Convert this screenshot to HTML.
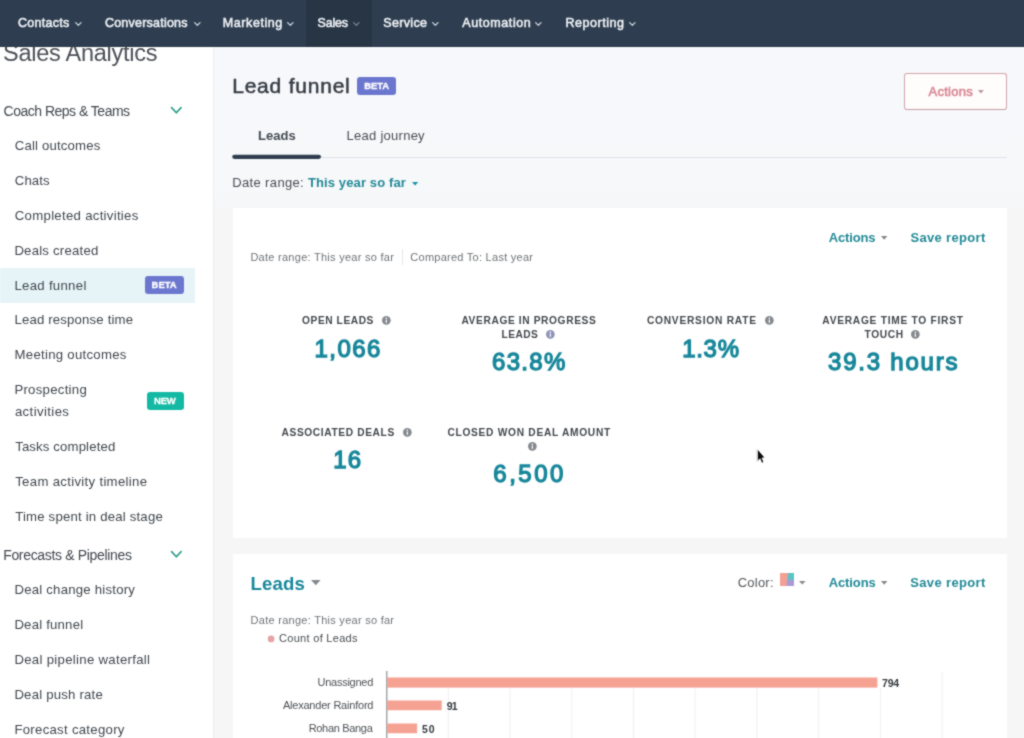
<!DOCTYPE html>
<html lang="en">
<head>
<meta charset="utf-8">
<title>Sales Analytics - Lead funnel</title>
<style>
html,body{margin:0;padding:0}
body{position:relative;width:1024px;height:738px;overflow:hidden;background:#f5f7f9;font-family:"Liberation Sans",Arial,sans-serif;color:#33475b}
h1,h2,h3,a,b,strong,span{margin:0;padding:0;font-weight:400;text-decoration:none}
.t{position:absolute;white-space:nowrap;line-height:1;display:block}
.ic{position:absolute;display:block;overflow:visible}
.box{position:absolute;display:block}
#navbg{left:-20px;top:-20px;width:1064px;height:67px;background:#2e3e50}
#nav .on{left:306px;top:-20px;width:66px;height:67px;background:#273545}
#side{left:-20px;top:46px;width:233px;height:712px;background:#fff;z-index:1}
#main{left:213px;top:46px;width:831px;height:712px;background:linear-gradient(#f6f8fb 0,#f6f8fa 140px,#f6f6f7 170px,#f6f6f7 100%);box-sizing:border-box;border-left:1.5px solid #ededee}
#app{position:absolute;left:0;top:0;width:1024px;height:738px;filter:url(#soft)}
.layer{position:absolute;left:0;top:0;width:1024px;height:738px}
.card{background:#fff}
.badge{border-radius:3px}
</style>
</head>
<body>
<svg width="0" height="0" style="position:absolute" aria-hidden="true"><defs><filter id="soft" x="0" y="0" width="100%" height="100%" color-interpolation-filters="sRGB"><feConvolveMatrix order="3" kernelMatrix="1 2 1 2 11 2 1 2 1" divisor="23" edgeMode="duplicate" preserveAlpha="true"/></filter></defs></svg>
<div id="app">

<div id="main" class="box"></div>
<div id="side" class="box"></div>

<aside class="layer" style="z-index:2">
<i class="box" style="left:0;top:268px;width:195px;height:35px;background:#e6f4f8"></i>
<i class="box badge" style="left:144.6px;top:276.2px;width:39.2px;height:18px;background:#6b77cf"></i>
<i class="box badge" style="left:146.6px;top:391.8px;width:37.2px;height:17.8px;background:#13b9a3"></i>
<svg class="ic" style="left:171.0px;top:107.2px" width="10.7" height="6.6" viewBox="0 0 10.7 6.6"><path d="M0.6 0.6 L5.35 5.8 L10.1 0.6" fill="none" stroke="#2a9c88" stroke-width="1.6" stroke-linecap="round" stroke-linejoin="round"/></svg>
<svg class="ic" style="left:171.0px;top:550.6px" width="10.7" height="6.6" viewBox="0 0 10.7 6.6"><path d="M0.6 0.6 L5.35 5.8 L10.1 0.6" fill="none" stroke="#2a9c88" stroke-width="1.6" stroke-linecap="round" stroke-linejoin="round"/></svg>
<h1 class="t" style="left:3.0px;top:42px;font-size:23.5px;color:#4c5157;letter-spacing:-0.25px;">Sales Analytics</h1>
<h2 class="t" style="left:3.6px;top:104px;font-size:14px;color:#41474d;letter-spacing:-0.51px;">Coach Reps &amp; Teams</h2>
<a class="t" style="left:14.8px;top:139px;font-size:13.2px;color:#41474d;letter-spacing:0.16px;">Call outcomes</a>
<a class="t" style="left:14.8px;top:174px;font-size:13.2px;color:#41474d;letter-spacing:0.09px;">Chats</a>
<a class="t" style="left:14.8px;top:209px;font-size:13.2px;color:#41474d;letter-spacing:0.29px;">Completed activities</a>
<a class="t" style="left:14.4px;top:244px;font-size:13.2px;color:#41474d;letter-spacing:0.21px;">Deals created</a>
<a class="t" style="left:14.4px;top:279px;font-size:13.2px;color:#41474d;letter-spacing:0.30px;">Lead funnel</a>
<a class="t" style="left:14.4px;top:313px;font-size:13.2px;color:#41474d;letter-spacing:0.17px;">Lead response time</a>
<a class="t" style="left:14.5px;top:348px;font-size:13.2px;color:#41474d;letter-spacing:0.28px;">Meeting outcomes</a>
<a class="t" style="left:14.4px;top:383px;font-size:13.2px;color:#41474d;letter-spacing:0.27px;">Prospecting</a>
<a class="t" style="left:14.9px;top:405px;font-size:13.2px;color:#41474d;letter-spacing:0.39px;">activities</a>
<a class="t" style="left:15.2px;top:440px;font-size:13.2px;color:#41474d;letter-spacing:0.13px;">Tasks completed</a>
<a class="t" style="left:15.2px;top:475px;font-size:13.2px;color:#41474d;letter-spacing:0.31px;">Team activity timeline</a>
<a class="t" style="left:15.2px;top:510px;font-size:13.2px;color:#41474d;letter-spacing:0.19px;">Time spent in deal stage</a>
<h2 class="t" style="left:3.2px;top:548px;font-size:14px;color:#41474d;letter-spacing:-0.33px;">Forecasts &amp; Pipelines</h2>
<a class="t" style="left:14.4px;top:583px;font-size:13.2px;color:#41474d;letter-spacing:0.22px;">Deal change history</a>
<a class="t" style="left:14.4px;top:618px;font-size:13.2px;color:#41474d;letter-spacing:0.20px;">Deal funnel</a>
<a class="t" style="left:14.4px;top:653px;font-size:13.2px;color:#41474d;letter-spacing:0.30px;">Deal pipeline waterfall</a>
<a class="t" style="left:14.4px;top:688px;font-size:13.2px;color:#41474d;letter-spacing:0.20px;">Deal push rate</a>
<a class="t" style="left:14.4px;top:723px;font-size:13.2px;color:#41474d;letter-spacing:0.28px;">Forecast category</a>
<b class="t" style="left:151.6px;top:280px;font-size:9.5px;font-weight:700;color:#fff;letter-spacing:-0.05px;-webkit-text-stroke:0.3px #fff;">BETA</b>
<b class="t" style="left:154.1px;top:396px;font-size:9.5px;font-weight:700;color:#fff;letter-spacing:-0.23px;-webkit-text-stroke:0.3px #fff;">NEW</b>
</aside>

<header class="layer" style="z-index:2">
<i class="box badge" style="left:357.4px;top:76.8px;width:38.8px;height:17.8px;background:#6b77cf"></i>
<i class="box" style="left:904.4px;top:73px;width:102.6px;height:37px;box-sizing:border-box;border:1px solid #d3a5ab;border-bottom-color:#c69da3;border-radius:3px;background:#fffcfc"></i>
<svg class="ic" style="left:978.0px;top:89.6px" width="5.8" height="3.4" viewBox="0 0 5.8 3.4"><path d="M0 0 H5.8 L2.9 3.4 Z" fill="#b8979c"/></svg>
<i class="box" style="left:233px;top:156.5px;width:774px;height:1px;background:#dde1e6"></i>
<svg class="ic" style="left:230px;top:150px" width="100" height="14" viewBox="230 150 100 14"><rect x="232.2" y="154.7" width="88.8" height="4.3" rx="2.15" fill="#2e3e50"/></svg>
<svg class="ic" style="left:411.8px;top:181.8px" width="6.2" height="3.4" viewBox="0 0 6.2 3.4"><path d="M0 0 H6.2 L3.1 3.4 Z" fill="#1b93a7"/></svg>
<h1 class="t" style="left:232.2px;top:75px;font-size:21px;color:#363c44;letter-spacing:0.78px;-webkit-text-stroke:0.5px #363c44;">Lead funnel</h1>
<b class="t" style="left:364.2px;top:81px;font-size:9.5px;font-weight:700;color:#fff;letter-spacing:-0.05px;-webkit-text-stroke:0.3px #fff;">BETA</b>
<span class="t" style="left:928.5px;top:85px;font-size:13px;color:#d98a94;letter-spacing:0.28px;-webkit-text-stroke:0.6px #d98a94;">Actions</span>
<a class="t" style="left:257.9px;top:129px;font-size:13px;font-weight:700;color:#444b53;letter-spacing:0.06px;">Leads</a>
<a class="t" style="left:346.6px;top:129px;font-size:13px;color:#4a4f55;letter-spacing:0.26px;">Lead journey</a>
<span class="t" style="left:232.3px;top:176px;font-size:13px;color:#4a4f55;letter-spacing:0.35px;">Date range:</span>
<a class="t" style="left:307.9px;top:176px;font-size:13px;font-weight:700;color:#238a97;letter-spacing:0.12px;">This year so far</a>
</header>

<section class="layer" style="z-index:2">
<i class="box card" style="left:233px;top:208px;width:774px;height:329.5px"></i>
<i class="box" style="left:402px;top:249px;width:1px;height:16px;background:#e3e6ea"></i>
<svg class="ic" style="left:881.0px;top:235.7px" width="6.4" height="3.8" viewBox="0 0 6.4 3.8"><path d="M0 0 H6.4 L3.2 3.8 Z" fill="#84888c"/></svg>
<svg class="ic" style="left:382.0px;top:316.2px" width="8.7" height="8.7" viewBox="0 0 10 10"><circle cx="5" cy="5" r="5" fill="#85898d"/><rect x="4.3" y="4.2" width="1.4" height="3.6" fill="#fff"/><circle cx="5" cy="2.7" r="0.9" fill="#fff"/></svg><svg class="ic" style="left:546.2px;top:329.8px" width="8.7" height="8.7" viewBox="0 0 10 10"><circle cx="5" cy="5" r="5" fill="#8f93b8"/><rect x="4.3" y="4.2" width="1.4" height="3.6" fill="#fff"/><circle cx="5" cy="2.7" r="0.9" fill="#fff"/></svg><svg class="ic" style="left:765.4px;top:316.2px" width="8.7" height="8.7" viewBox="0 0 10 10"><circle cx="5" cy="5" r="5" fill="#85898d"/><rect x="4.3" y="4.2" width="1.4" height="3.6" fill="#fff"/><circle cx="5" cy="2.7" r="0.9" fill="#fff"/></svg><svg class="ic" style="left:911.4px;top:329.8px" width="8.7" height="8.7" viewBox="0 0 10 10"><circle cx="5" cy="5" r="5" fill="#85898d"/><rect x="4.3" y="4.2" width="1.4" height="3.6" fill="#fff"/><circle cx="5" cy="2.7" r="0.9" fill="#fff"/></svg><svg class="ic" style="left:403.0px;top:427.6px" width="8.7" height="8.7" viewBox="0 0 10 10"><circle cx="5" cy="5" r="5" fill="#85898d"/><rect x="4.3" y="4.2" width="1.4" height="3.6" fill="#fff"/><circle cx="5" cy="2.7" r="0.9" fill="#fff"/></svg><svg class="ic" style="left:528.4px;top:441.6px" width="8.7" height="8.7" viewBox="0 0 10 10"><circle cx="5" cy="5" r="5" fill="#85898d"/><rect x="4.3" y="4.2" width="1.4" height="3.6" fill="#fff"/><circle cx="5" cy="2.7" r="0.9" fill="#fff"/></svg>
<span class="t" style="left:250.4px;top:252px;font-size:11px;color:#6f7377;letter-spacing:0.27px;">Date range: This year so far</span>
<span class="t" style="left:410.3px;top:252px;font-size:11px;color:#6f7377;letter-spacing:0.26px;">Compared To: Last year</span>
<a class="t" style="left:828.7px;top:231px;font-size:13px;font-weight:700;color:#238a97;letter-spacing:-0.13px;">Actions</a>
<a class="t" style="left:910.5px;top:231px;font-size:13px;font-weight:700;color:#238a97;letter-spacing:0.32px;">Save report</a>
<h3 class="t" style="left:302.1px;top:316px;font-size:10.2px;font-weight:700;color:#43474c;letter-spacing:0.56px;">OPEN LEADS</h3>
<h3 class="t" style="left:461.4px;top:316px;font-size:10.2px;font-weight:700;color:#43474c;letter-spacing:0.62px;">AVERAGE IN PROGRESS</h3>
<h3 class="t" style="left:501.5px;top:330px;font-size:10.2px;font-weight:700;color:#43474c;letter-spacing:0.47px;">LEADS</h3>
<h3 class="t" style="left:646.9px;top:316px;font-size:10.2px;font-weight:700;color:#43474c;letter-spacing:0.77px;">CONVERSION RATE</h3>
<h3 class="t" style="left:822.3px;top:316px;font-size:10.2px;font-weight:700;color:#43474c;letter-spacing:0.74px;">AVERAGE TIME TO FIRST</h3>
<h3 class="t" style="left:864.5px;top:330px;font-size:10.2px;font-weight:700;color:#43474c;letter-spacing:0.63px;">TOUCH</h3>
<h3 class="t" style="left:281.5px;top:428px;font-size:10.2px;font-weight:700;color:#43474c;letter-spacing:0.62px;">ASSOCIATED DEALS</h3>
<h3 class="t" style="left:447.4px;top:428px;font-size:10.2px;font-weight:700;color:#43474c;letter-spacing:0.72px;">CLOSED WON DEAL AMOUNT</h3>
<strong class="t" style="left:314.5px;top:337px;font-size:24px;color:#17879a;letter-spacing:1.46px;-webkit-text-stroke:1.3px #17879a;">1,066</strong>
<strong class="t" style="left:492.1px;top:350px;font-size:24px;color:#17879a;letter-spacing:1.29px;-webkit-text-stroke:1.3px #17879a;">63.8%</strong>
<strong class="t" style="left:682.2px;top:337px;font-size:24px;color:#17879a;letter-spacing:0.71px;-webkit-text-stroke:1.3px #17879a;">1.3%</strong>
<strong class="t" style="left:828.0px;top:350px;font-size:24px;color:#17879a;letter-spacing:1.79px;-webkit-text-stroke:1.3px #17879a;">39.3 hours</strong>
<strong class="t" style="left:333.2px;top:448px;font-size:24px;color:#17879a;letter-spacing:1.25px;-webkit-text-stroke:1.3px #17879a;">16</strong>
<strong class="t" style="left:493.3px;top:462px;font-size:24px;color:#17879a;letter-spacing:2.52px;-webkit-text-stroke:1.3px #17879a;">6,500</strong>
</section>

<section class="layer" style="z-index:2">
<i class="box card" style="left:233px;top:553.6px;width:774px;height:205px"></i>
<svg class="ic" style="left:311.3px;top:580.0px" width="9.6" height="5.2" viewBox="0 0 9.6 5.2"><path d="M0 0 H9.6 L4.8 5.2 Z" fill="#85888c"/></svg>
<i class="box" style="left:780.4px;top:573px;width:13.2px;height:13.2px;background:linear-gradient(97deg,#f3a094 0,#f3a094 46%,rgba(243,160,148,0) 58%),linear-gradient(180deg,#58c4c6 0,#58c4c6 42%,#a99ad6 62%,#a99ad6 100%)"></i>
<svg class="ic" style="left:799.2px;top:580.6px" width="6.6" height="3.6" viewBox="0 0 6.6 3.6"><path d="M0 0 H6.6 L3.3 3.6 Z" fill="#86898d"/></svg>
<svg class="ic" style="left:881.0px;top:580.6px" width="6.4" height="3.8" viewBox="0 0 6.4 3.8"><path d="M0 0 H6.4 L3.2 3.8 Z" fill="#84888c"/></svg>
<svg class="ic" style="left:264px;top:632px" width="14" height="14" viewBox="264 632 14 14"><circle cx="271.1" cy="638.9" r="3.35" fill="#e6a3a6"/></svg>
<svg class="ic" style="left:380px;top:665px" width="640" height="93" viewBox="380 665 640 93" aria-label="Count of Leads bar chart">
<rect x="447.8" y="688" width="1" height="90" fill="#eeeff1"/><rect x="509.5" y="688" width="1" height="90" fill="#eeeff1"/><rect x="571.3" y="688" width="1" height="90" fill="#eeeff1"/><rect x="633.0" y="688" width="1" height="90" fill="#eeeff1"/><rect x="694.7" y="688" width="1" height="90" fill="#eeeff1"/><rect x="756.4" y="688" width="1" height="90" fill="#eeeff1"/><rect x="818.1" y="688" width="1" height="90" fill="#eeeff1"/><rect x="879.9" y="688" width="1" height="90" fill="#eeeff1"/><rect x="941.6" y="671.5" width="1" height="90" fill="#eeeff1"/>
<rect x="386.2" y="671" width="1.2" height="90" fill="#8d9196"/>
<rect class="b" x="387.2" y="677.5" width="490.2" height="10.1" fill="#f6a293"/>
<rect class="b" x="387.2" y="700.5" width="54.5" height="9.7" fill="#f6a293"/>
<rect class="b" x="387.2" y="723.5" width="29.9" height="9.7" fill="#f6a293"/>
</svg>
<h2 class="t" style="left:250.5px;top:575px;font-size:18.6px;font-weight:700;color:#17879a;letter-spacing:0.17px;">Leads</h2>
<span class="t" style="left:737.7px;top:576px;font-size:13px;color:#53575b;letter-spacing:0.23px;">Color:</span>
<a class="t" style="left:828.7px;top:576px;font-size:13px;font-weight:700;color:#238a97;letter-spacing:-0.10px;">Actions</a>
<a class="t" style="left:910.2px;top:576px;font-size:13px;font-weight:700;color:#238a97;letter-spacing:0.36px;">Save report</a>
<span class="t" style="left:250.6px;top:615px;font-size:11px;color:#6f7377;letter-spacing:0.27px;">Date range: This year so far</span>
<span class="t" style="left:279.0px;top:633px;font-size:11px;color:#494d51;letter-spacing:0.30px;">Count of Leads</span>
<span class="t" style="left:317.5px;top:677px;font-size:11px;color:#4d5155;letter-spacing:-0.25px;">Unassigned</span>
<span class="t" style="left:282.9px;top:700px;font-size:11px;color:#4d5155;letter-spacing:-0.21px;">Alexander Rainford</span>
<span class="t" style="left:308.7px;top:723px;font-size:11px;color:#4d5155;letter-spacing:-0.32px;">Rohan Banga</span>
<span class="t" style="left:882.1px;top:678px;font-size:10.5px;font-weight:700;color:#33383d;letter-spacing:-0.28px;text-shadow:-1px 0 #fff,1px 0 #fff,0 -1px #fff,0 1px #fff,-1px -1px #fff,1px 1px #fff,1px -1px #fff,-1px 1px #fff;">794</span>
<span class="t" style="left:446.8px;top:701px;font-size:10.5px;font-weight:700;color:#33383d;letter-spacing:-0.99px;text-shadow:-1px 0 #fff,1px 0 #fff,0 -1px #fff,0 1px #fff,-1px -1px #fff,1px 1px #fff,1px -1px #fff,-1px 1px #fff;">91</span>
<span class="t" style="left:421.9px;top:724px;font-size:10.5px;font-weight:700;color:#33383d;letter-spacing:0.92px;text-shadow:-1px 0 #fff,1px 0 #fff,0 -1px #fff,0 1px #fff,-1px -1px #fff,1px 1px #fff,1px -1px #fff,-1px 1px #fff;">50</span>
</section>

<svg class="ic" style="left:750px;top:445px;z-index:9" width="20" height="22" viewBox="750 445 20 22"><path d="M757 449.2 L757 461.4 L759.8 459" fill="none" stroke="#cdcdcd" stroke-width="1"/><path d="M757.9 449.9 L757.9 460.3 L760.2 458.3 L762 462.7 L763.3 462.1 L761.6 457.8 L764.3 457.4 Z" fill="#0a0a0a"/></svg>

<nav id="nav" class="layer" style="z-index:5">
<i id="navbg" class="box"></i>
<i class="box on"></i>
<svg class="ic" style="left:74.6px;top:21.5px" width="6.7" height="4.1" viewBox="0 0 6.7 4.1"><path d="M0.6 0.6 L3.35 3.3 L6.1000000000000005 0.6" fill="none" stroke="#c9d1da" stroke-width="1.3" stroke-linecap="round" stroke-linejoin="round"/></svg><svg class="ic" style="left:193.6px;top:21.5px" width="6.7" height="4.1" viewBox="0 0 6.7 4.1"><path d="M0.6 0.6 L3.35 3.3 L6.1000000000000005 0.6" fill="none" stroke="#c9d1da" stroke-width="1.3" stroke-linecap="round" stroke-linejoin="round"/></svg><svg class="ic" style="left:287.2px;top:21.5px" width="6.7" height="4.1" viewBox="0 0 6.7 4.1"><path d="M0.6 0.6 L3.35 3.3 L6.1000000000000005 0.6" fill="none" stroke="#c9d1da" stroke-width="1.3" stroke-linecap="round" stroke-linejoin="round"/></svg><svg class="ic" style="left:353.0px;top:21.5px" width="6.7" height="4.1" viewBox="0 0 6.7 4.1"><path d="M0.6 0.6 L3.35 3.3 L6.1000000000000005 0.6" fill="none" stroke="#75828f" stroke-width="1.3" stroke-linecap="round" stroke-linejoin="round"/></svg><svg class="ic" style="left:432.2px;top:21.5px" width="6.7" height="4.1" viewBox="0 0 6.7 4.1"><path d="M0.6 0.6 L3.35 3.3 L6.1000000000000005 0.6" fill="none" stroke="#c9d1da" stroke-width="1.3" stroke-linecap="round" stroke-linejoin="round"/></svg><svg class="ic" style="left:535.2px;top:21.5px" width="6.7" height="4.1" viewBox="0 0 6.7 4.1"><path d="M0.6 0.6 L3.35 3.3 L6.1000000000000005 0.6" fill="none" stroke="#c9d1da" stroke-width="1.3" stroke-linecap="round" stroke-linejoin="round"/></svg><svg class="ic" style="left:629.0px;top:21.5px" width="6.7" height="4.1" viewBox="0 0 6.7 4.1"><path d="M0.6 0.6 L3.35 3.3 L6.1000000000000005 0.6" fill="none" stroke="#c9d1da" stroke-width="1.3" stroke-linecap="round" stroke-linejoin="round"/></svg>
<a class="t" style="left:18.1px;top:17px;font-size:12.5px;color:#edf0f4;letter-spacing:0.25px;-webkit-text-stroke:0.55px #edf0f4;">Contacts</a>
<a class="t" style="left:104.9px;top:17px;font-size:12.5px;color:#edf0f4;letter-spacing:0.23px;-webkit-text-stroke:0.55px #edf0f4;">Conversations</a>
<a class="t" style="left:222.8px;top:17px;font-size:12.5px;color:#edf0f4;letter-spacing:0.58px;-webkit-text-stroke:0.55px #edf0f4;">Marketing</a>
<a class="t" style="left:317.5px;top:17px;font-size:12.5px;color:#edf0f4;letter-spacing:-0.19px;-webkit-text-stroke:0.55px #edf0f4;">Sales</a>
<a class="t" style="left:383.3px;top:17px;font-size:12.5px;color:#edf0f4;letter-spacing:0.32px;-webkit-text-stroke:0.55px #edf0f4;">Service</a>
<a class="t" style="left:462.3px;top:17px;font-size:12.5px;color:#edf0f4;letter-spacing:0.58px;-webkit-text-stroke:0.55px #edf0f4;">Automation</a>
<a class="t" style="left:565.4px;top:17px;font-size:12.5px;color:#edf0f4;letter-spacing:0.55px;-webkit-text-stroke:0.55px #edf0f4;">Reporting</a>
</nav>

</div>
</body>
</html>
